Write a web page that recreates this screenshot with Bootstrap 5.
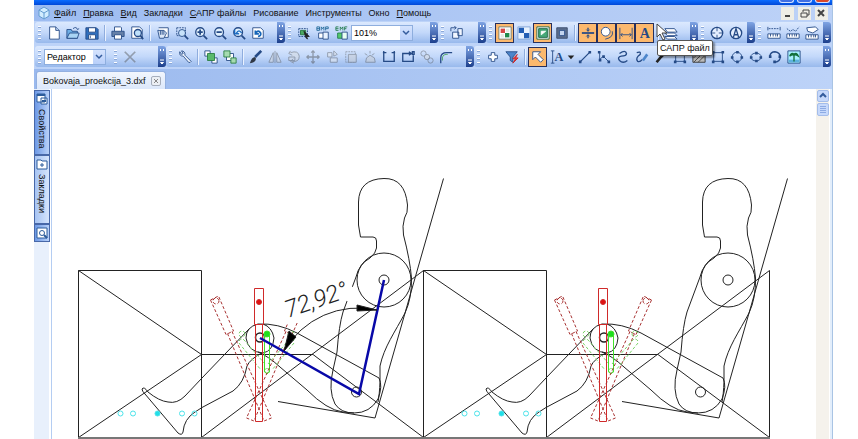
<!DOCTYPE html>
<html lang="ru">
<head>
<meta charset="utf-8">
<meta name="viewport" content="width=device-width, initial-scale=1">
<title>Bokovaja_proekcija_3.dxf</title>
<link href="https://cdn.jsdelivr.net/npm/bootstrap@5.3.0/dist/css/bootstrap.min.css" rel="stylesheet">
<style>
body{font-family:"Liberation Sans",Arial,sans-serif;font-size:9px;line-height:12px;color:#111;background:#fff}
.app{margin:0 25px 0 34px;background:#bdd3f8;border-right:1px solid #a9c4e4}
.titlebar{height:5px;background:linear-gradient(#0a6cff,#0048d8);gap:3px}
.wbtn{width:15px;height:3px;padding:0;border:1px solid #d5e2ff;border-top:0;border-radius:0 0 3px 3px;background:#3f6fe4}
.wbtn.closer{background:#d9482a;margin-right:2px}
.menubar{height:16px;background:linear-gradient(90deg,#9dbcf1,#bdd2f7)}
.menubar a{color:#111;text-decoration:none;padding:0 3px 0 4px}
.menubar u{text-underline-offset:1px}
.mdi button{width:13px;height:13px;padding:0;border:0;background:#efeee6;line-height:0}
.toolrow{display:grid;height:24px;padding:1px}
.row-one{grid-template-columns:250fr 153fr 48fr 212fr 57fr 76fr}
.row-two{grid-template-columns:131fr 308fr 357fr}
.band{height:21px;background:linear-gradient(#dce9fe,#c3d8fa 50%,#98b9ec);border-radius:3px;padding-left:3px;min-width:0}
.grip{width:3px;height:14px;flex:none;margin-right:3px;background:repeating-linear-gradient(#fff 0 1px,#8ba8d8 1px 2px,transparent 2px 4px)}
.tool{width:19px;height:20px;flex:none;padding:1px;border:1px solid transparent;background:none;display:flex;align-items:center;justify-content:center}
.tool.on{background:#fcb96e;border-color:#26305e}
.tool.off{opacity:.45;filter:grayscale(1)}
.tool svg{width:14px;height:14px;flex:none;fill:none;stroke:#254a86}
.tool text{font-family:"Liberation Serif",serif;font-weight:bold;fill:#254a86;stroke:none}
.tool.caret{width:9px}
.div{width:1px;height:16px;background:#8fadde;margin:0 3px;flex:none;box-shadow:1px 0 #eaf2ff}
.more{width:8px;height:21px;flex:none;margin-left:auto;padding:0;border:0;border-radius:0 3px 3px 0;background:linear-gradient(#7fa4e4,#1c3f8c);display:flex}
.more svg{width:8px;height:21px;fill:none}
.combo{border:1px solid #8eaede;width:62px;height:16px;padding:0 2px;border-radius:0;font-size:9px;line-height:14px;color:#000;appearance:none;
background:linear-gradient(#d5e3fd,#b8cffa) right/12px 100% no-repeat,#fff}
.combo-box{position:relative;display:flex}
.combo-box svg{position:absolute;right:3px;top:5px;width:8px;height:6px;pointer-events:none;fill:none}
.tabs{height:20px;padding-left:2px;background:linear-gradient(90deg,#9ab9ee,#bdd3f8)}
.doc{height:18px;width:130px;padding:0 4px 0 6px;background:linear-gradient(#f2f6fd,#dce8fb);border:1px solid #93b0e0;border-bottom:0;border-radius:3px 3px 0 0}
.doc a{color:#111;text-decoration:none}
.doc button{width:10px;height:10px;padding:0;border:1px solid #a6aebc;background:#eceff4;border-radius:2px;line-height:0}
.side{width:18px;background:linear-gradient(90deg,#e8f0fc 0 15px,#fff 15px 17px,#b4cdf2 17px);padding-top:1px}
.side button{width:16px;padding:2px 0;border:1px solid #4868a8;background:linear-gradient(90deg,#6d99e6,#b9d1f8);gap:4px;color:#111;line-height:12px}
.side .pick{background:linear-gradient(90deg,#a7c4f3,#d6e5fc)}
.side svg{width:12px;height:12px;flex:none}
.side span{writing-mode:vertical-rl}
.tall{height:65px}
.taller{height:69px}
.short{height:18px}
.sheet{background:#fff;min-height:0;overflow:hidden}
.vbar{width:13px;background:#f5f2ec;gap:1px;padding-top:1px}
.vbar button{width:12px;height:12px;padding:0;border:1px solid #a4bdea;border-radius:2px;background:#c7d9fb;line-height:0}
.vbar .thumb{height:13px}
.edge{width:3px;background:#e3eefb;border-left:1px solid #fff}
.tip{position:absolute;left:657px;top:40px;padding:1px 2px;border:1px solid #555;background:#fff;border-radius:2px;box-shadow:2px 2px 2px #0006;white-space:nowrap}
.pointer{position:absolute;left:656px;top:23px;width:12px;height:18px}
.cad{width:0;fill:none;stroke:#222;stroke-width:1}
.dim{font-family:Roboto,"Liberation Sans",sans-serif;font-weight:300;font-style:italic;font-size:24px;fill:#222;stroke:none}
</style>
<script src="https://cdn.jsdelivr.net/npm/bootstrap@5.3.0/dist/js/bootstrap.bundle.min.js"></script>
</head>
<body class="position-relative">
<svg width="0" height="0" class="position-absolute">
<symbol id="new" viewBox="0 0 16 16"><path d="M3 1h7l4 4v10H3z" fill="#fff"/><path d="M10 1v4h4" fill="#c5d8f6"/></symbol>
<symbol id="open" viewBox="0 0 16 16"><path d="M1 14V4h5l1 2h6v8z" fill="#6daee6"/><path d="M1 14l3-6h11l-2 6z" fill="#a9d4f5"/><path d="M8 3q4-3 5 1l2-1"/></symbol>
<symbol id="save" viewBox="0 0 16 16"><path d="M1 2h12l2 2v11H1z" fill="#2f6fbe"/><path d="M4 2h8v5H4zM4 10h8v5H4z" fill="#fff"/><path d="M6 11v3"/></symbol>
<symbol id="print" viewBox="0 0 16 16"><path d="M4 6V1h7l1 1v4" fill="#fff"/><path d="M1 6h14v6H1z" fill="#6580a8"/><path d="M4 10h8v5H4z" fill="#fff"/></symbol>
<symbol id="preview" viewBox="0 0 16 16"><path d="M2 1h9l3 3v10H2z" fill="#fff"/><circle cx="9" cy="8" r="4" fill="#bfe0fa" stroke-width="1.5"/><path d="M12 11l3 4" stroke-width="2"/></symbol>
<symbol id="pan" viewBox="0 0 16 16"><path d="M3 2h11v11H5" fill="#fff"/><path d="M2 5h7l3 3-3 6H4z" fill="#dce8f8"/><path d="M5 5v5m2-5v5m2-5v5"/></symbol>
<symbol id="zwin" viewBox="0 0 16 16"><path d="M2 2h10v9H2z" stroke-dasharray="2 1"/><circle cx="8" cy="8" r="4" fill="#c7e2fa"/><path d="M11 11l4 4" stroke-width="2"/></symbol>
<symbol id="zin" viewBox="0 0 16 16"><circle cx="7" cy="7" r="5" fill="#e2f1fd" stroke-width="1.5"/><path d="M11 11l4 4" stroke-width="2"/><path d="M4 7h6M7 4v6" stroke-width="2"/></symbol>
<symbol id="zout" viewBox="0 0 16 16"><circle cx="7" cy="7" r="5" fill="#e2f1fd" stroke-width="1.5"/><path d="M11 11l4 4" stroke-width="2"/><path d="M4 7h6" stroke-width="2"/></symbol>
<symbol id="zback" viewBox="0 0 16 16"><circle cx="7" cy="7" r="5" fill="#e2f1fd" stroke-width="1.5"/><path d="M11 11l4 4" stroke-width="2"/><path d="M3 4v5h5L5 8q3-5 6 0" stroke="#1a6ac0" stroke-width="1.5"/></symbol>
<symbol id="redraw" viewBox="0 0 16 16"><path d="M2 2h9l3 3v9H2z" fill="#fff"/><path d="M5 5v4h4M5 9q3-6 6-1 1 3-3 4" stroke="#1766b8" stroke-width="2"/></symbol>
<symbol id="sel" viewBox="0 0 16 16"><path d="M2 3h10v9H2z" stroke-dasharray="2 1"/><path d="M4 5h6v5H4z" fill="#4aa860" stroke="#23733c"/><path d="M8 6l6 6-3 0 1 3-2-2z" fill="#222" stroke="#222"/></symbol>
<symbol id="bmp" viewBox="0 0 16 16"><path d="M1 5V1h3v4zM1 3h3M6 5V1l1.500 2L9 1v4M11 5V1h3v2h-3" stroke="#246a9a"/><path d="M3 8h6v6H3z" fill="#fff"/><path d="M8 7h6v8H8z" fill="#e8f2ff"/></symbol>
<symbol id="emf" viewBox="0 0 16 16"><path d="M4 1H1v4h3M1 3h3M6 5V1l1.500 2L9 1v4M11 5V1h3m-3 2h2" stroke="#257d50"/><path d="M3 8h6v6H3z" fill="#54c96a" stroke="#257d50"/><path d="M8 7h6v8H8z" fill="#e8fff2"/></symbol>
<symbol id="copyv" viewBox="0 0 16 16"><path d="M9 3h5v8H9zM3 7h7v7H3z" fill="#f2f7ff"/><path d="M1 6V2h6M5 0l2 2-2 2"/></symbol>
<symbol id="rg" viewBox="0 0 16 16"><path d="M1 1h14v14H1z" fill="#fff" stroke="#6b7c70"/><path d="M3 3h5v5H3z" fill="#d64a48" stroke="none"/><path d="M8 8h5v5H8z" fill="#1f8a4c" stroke="none"/><path d="M9 3h4v4H9zM3 9h4v4H3z" fill="#e4ece6" stroke="none"/></symbol>
<symbol id="bw" viewBox="0 0 16 16"><path d="M1 1h14v14H1z" fill="#e7f2ff" stroke="#7fa2d5"/><path d="M2 2h6v6H2zM8 8h6v6H8z" fill="#225eb4" stroke="none"/></symbol>
<symbol id="gr" viewBox="0 0 16 16"><path d="M1 1h14v14H1z" fill="#fff" stroke="#176443"/><path d="M3 3h10v10H3z" fill="#46a878" stroke="#176443"/><path d="M6 10V6h5z" fill="#fff" stroke="#fff"/></symbol>
<symbol id="bk" viewBox="0 0 16 16"><path d="M2 2h12v12H2z" fill="#5b6e8e" stroke="#37496a"/><path d="M5 5h6v6H5z" fill="#c4d5ef"/></symbol>
<symbol id="hl" viewBox="0 0 16 16"><path d="M1 8h14" stroke-width="2"/><path d="M8 2v4m0 4v4" stroke-width="1.500"/><path d="M6 4l2 2 2-2M6 12l2-2 2 2"/></symbol>
<symbol id="arcs" viewBox="0 0 16 16"><circle cx="6.500" cy="6.500" r="5" fill="#fff"/><path d="M14 6q2 7-8 9"/></symbol>
<symbol id="dimh" viewBox="0 0 16 16"><path d="M1 2v13M15 2v13M2 10h12M4 8l-2 2 2 2m8-4l2 2-2 2"/></symbol>
<symbol id="layers" viewBox="0 0 16 16"><path d="M1 12h11l3 3H4zM1 8h11l3 3H4zM1 3h11l3 4H4z" fill="#fff"/></symbol>
<symbol id="snap" viewBox="0 0 16 16"><circle cx="8" cy="8" r="6.500" fill="#e5efff" stroke-width="1.500"/><path d="M8 1v5m0 4v5M1 8h5m4 0h5"/></symbol>
<symbol id="snapa" viewBox="0 0 16 16"><circle cx="8" cy="8" r="6.500" fill="#e5efff" stroke-width="1.500"/><path d="M5 13L8 3l3 10M6 10h4" stroke-width="1.500"/></symbol>
<symbol id="m1" viewBox="0 0 16 16"><path d="M2 3h12" stroke-dasharray="2 1"/><path d="M1 9h14v5H1z" fill="#fff"/><path d="M4 9v3m3-3v3m3-3v3m2-3v3M1 1v4m14-4v4"/></symbol>
<symbol id="m2" viewBox="0 0 16 16"><path d="M1 3l4 3 3-2 3 2 4-5" stroke-dasharray="2 1"/><path d="M1 9h14v5H1z" fill="#fff"/><path d="M4 9v3m3-3v3m3-3v3m2-3v3"/></symbol>
<symbol id="m3" viewBox="0 0 16 16"><path d="M2 2l10-1 3 3-6 4-6-2zM1 10h14v5H1z" fill="#fff"/><path d="M4 10v3m3-3v3m3-3v3m2-3v3"/></symbol>
<symbol id="x" viewBox="0 0 16 16"><path d="M2 2l12 12M14 2L2 14" stroke="#5b5242" stroke-width="2"/></symbol>
<symbol id="wrench" viewBox="0 0 16 16"><path d="M2 2q-1 5 4 5l6 7q2 1 3-1L8 6q0-5-4-5l2 3-2 1z" fill="#f3f8ff"/></symbol>
<symbol id="grp" viewBox="0 0 16 16"><path d="M1 1h6v6H1zM9 9h6v6H9z" fill="#fff"/><path d="M4 4h8v8H4z" fill="#59b96c" stroke="#287d40"/></symbol>
<symbol id="ungrp" viewBox="0 0 16 16"><path d="M4 4h8v8H4z" fill="#fff"/><path d="M1 1h7v7H1zM9 9h6v6H9z" fill="#a6dbb0" stroke="#287d40"/></symbol>
<symbol id="brush" viewBox="0 0 16 16"><path d="M14 1L7 8" stroke-width="3"/><path d="M7 8q-4 0-6 7 6 0 7-5z" fill="#303845" stroke="none"/></symbol>
<symbol id="mirror" viewBox="0 0 16 16"><path d="M6 3v11H1zM10 3v11h5z" fill="#ddd"/><path d="M8 1v14"/></symbol>
<symbol id="rot" viewBox="0 0 16 16"><path d="M4 3q9-3 10 4 0 7-8 6M7 10l-3 3 4 2M4 1L2 4l4 2M2 8h7v4H2z" fill="#ddd"/></symbol>
<symbol id="move" viewBox="0 0 16 16"><path d="M8 1v14M1 8h14M6 3l2-2 2 2M6 13l2 2 2-2M3 6L1 8l2 2m10-4l2 2-2 2" stroke-width="1.500"/></symbol>
<symbol id="copies" viewBox="0 0 16 16"><path d="M3 3h5v5H3zM10 1l4 4-4 2zM6 9h8v5H6z" fill="#eee"/></symbol>
<symbol id="scale" viewBox="0 0 16 16"><path d="M2 2h11v12H2z" stroke-dasharray="2 1"/><path d="M5 5h9v9H5z" fill="#ccc"/></symbol>
<symbol id="burst" viewBox="0 0 16 16"><path d="M3 14l1-5 4-3 5 3 1 5zM8 1v3M2 4l3 2m8-2l-3 2" fill="#ccc"/></symbol>
<symbol id="join" viewBox="0 0 16 16"><path d="M2 4v9h12V4M1 3h4m6 0h4M2 1v4m12-4v4" stroke-width="1.500"/></symbol>
<symbol id="rect1" viewBox="0 0 16 16"><path d="M11 4H2v9h12V6M9 2l3 2-3 2M13 2h2v3h-2z" stroke-width="1.500"/></symbol>
<symbol id="chain" viewBox="0 0 16 16"><circle cx="4" cy="4" r="3"/><circle cx="8" cy="8" r="3" fill="#ddd"/><circle cx="12" cy="12" r="3"/></symbol>
<symbol id="fillet" viewBox="0 0 16 16"><path d="M2 15V9q0-6 7-6h6" stroke-width="1.500"/><path d="M4 12V8q1-3 4-3h2" stroke="#4aa860"/></symbol>
<symbol id="plus" viewBox="0 0 16 16"><path d="M6 3h4v3h3v4h-3v3H6v-3H3V6h3z" fill="#fff"/></symbol>
<symbol id="filter" viewBox="0 0 16 16"><path d="M1 2h13L9 8v6l-3-2V8z" fill="#4d86cb"/><path d="M14 5l-5 5h3l-3 5 6-6h-3z" fill="#ef4545" stroke="#c22"/></symbol>
<symbol id="arrow" viewBox="0 0 16 16"><path d="M2 2h9L8 5l6 6-3 3-6-6-3 3z" fill="#fff"/></symbol>
<symbol id="line" viewBox="0 0 16 16"><path d="M3 13L13 3" stroke-width="1.500"/><path d="M1 12h3v3H1zM12 1h3v3h-3z" fill="#254a86" stroke="none"/></symbol>
<symbol id="poly" viewBox="0 0 16 16"><path d="M3 3v8l4-4 6 6"/><path d="M1 1h3v3H1zM2 10h3v3H2zM6 6h3v3H6zM12 12h3v3h-3z" fill="#254a86" stroke="none"/></symbol>
<symbol id="spline" viewBox="0 0 16 16"><path d="M4 4q7-5 8 0 0 3-6 3-5 1-2 5 4 4 9 0" stroke-width="1.500"/></symbol>
<symbol id="free" viewBox="0 0 16 16"><path d="M2 3q5-2 4 2-6 4-3 8 3 1 5-2" stroke-width="1.500"/><path d="M9 12l5-7" stroke="#4d86cb" stroke-width="3"/></symbol>
<symbol id="pen" viewBox="0 0 16 16"><path d="M3 14l4-5 5-5" stroke="#222" stroke-width="3"/></symbol>
<symbol id="hatch" viewBox="0 0 16 16"><path d="M1 3h14v11H1z" fill="#bbb" stroke="#333"/><path d="M2 9l6-6M2 14L13 3M7 14l8-8" stroke="#444"/></symbol>
<symbol id="box" viewBox="0 0 16 16"><path d="M3 3h10v10H3z"/><path d="M1 1h3v3H1zM12 1h3v3h-3zM1 12h3v3H1zM12 12h3v3h-3z" fill="#254a86" stroke="none"/></symbol>
<symbol id="circ" viewBox="0 0 16 16"><circle cx="8" cy="8" r="5.500"/><path d="M7 1h3v3H7zM7 12h3v3H7zM1 7h3v3H1zM12 7h3v3h-3z" fill="#254a86" stroke="none"/></symbol>
<symbol id="ell" viewBox="0 0 16 16"><ellipse cx="8" cy="8" rx="6" ry="4.500"/><path d="M7 2h3v3H7zM7 11h3v3H7zM1 7h3v3H1zM12 7h3v3h-3z" fill="#254a86" stroke="none"/></symbol>
<symbol id="arc" viewBox="0 0 16 16"><path d="M2 7q1-5 6-5 6 1 6 6 0 5-6 6" stroke-width="1.500"/><path d="M1 6h3v3H1zM12 6h3v3h-3zM6 12h3v3H6z" fill="#254a86" stroke="none"/></symbol>
<symbol id="img" viewBox="0 0 16 16"><path d="M1 1h14v14H1z" fill="#a7efff"/><path d="M2 11h12v3H2z" fill="#5cb2df" stroke="none"/><path d="M8 5v8M3 7q2-5 5-2 3-3 5 2-3-2-5-1-2-1-5 1" fill="#159647" stroke="#126e38" stroke-width="1.500"/></symbol>
<symbol id="mo" viewBox="0 0 8 21"><path d="M2 3l1 1-1 1m3-2l1 1-1 1M2 14h4M2.500 16.500h3L4 18z" stroke="#fff"/></symbol>
<symbol id="mo2" viewBox="0 0 8 21"><path d="M2 14h4M2.500 16.500h3L4 18z" stroke="#fff"/></symbol>
<symbol id="dn" viewBox="0 0 8 6"><path d="M1 1l3 3 3-3" stroke="#345c9c" stroke-width="1.500"/></symbol>
</svg>

<div class="app d-flex flex-column vh-100">
<header class="titlebar d-flex justify-content-end">
<button class="wbtn" aria-label="Свернуть"></button><button class="wbtn" aria-label="Развернуть"></button><button class="wbtn closer" aria-label="Закрыть"></button>
</header>
<nav class="menubar d-flex align-items-center ps-1 flex-shrink-0">
<svg width="12" height="14" viewBox="0 0 12 14" fill="none" stroke="#639bd0"><path d="M1 4l5-3 5 3v6l-5 3-5-3z" fill="#d1ecff"/><path d="M1 4l5 3 5-3M6 7v6"/></svg>
<a href="#"><u>Ф</u>айл</a><a href="#"><u>П</u>равка</a><a href="#"><u>В</u>ид</a><a href="#">Закладки</a><a href="#"><u>С</u>АПР файлы</a><a href="#">Рисование</a><a href="#">Инструменты</a><a href="#">Окно</a><a href="#"><u>П</u>омощь</a>
<div class="mdi d-flex gap-1 ms-auto pe-1"><button aria-label="Свернуть документ"><svg width="11" height="11"><path d="M3 8h5" stroke="#444" stroke-width="2"/></svg></button><button aria-label="Восстановить документ"><svg width="11" height="11" fill="none" stroke="#444"><path d="M4 4V2h6v5H8M2 5h6v4H2z"/></svg></button><button aria-label="Закрыть документ"><svg width="11" height="11"><path d="M2 2l6 6m0-6L2 8" stroke="#444" stroke-width="2"/></svg></button></div>
</nav>

<div class="toolrow row-one flex-shrink-0" role="toolbar" aria-label="Стандартная">
<div class="band d-flex align-items-center"><i class="grip"></i>
<button class="tool" aria-label="Новый"><svg><use href="#new"/></svg></button><button class="tool" aria-label="Открыть"><svg><use href="#open"/></svg></button><button class="tool" aria-label="Сохранить"><svg><use href="#save"/></svg></button><i class="div"></i>
<button class="tool" aria-label="Печать"><svg><use href="#print"/></svg></button><button class="tool" aria-label="Просмотр"><svg><use href="#preview"/></svg></button><i class="div"></i>
<button class="tool" aria-label="Панорама"><svg><use href="#pan"/></svg></button><button class="tool" aria-label="Окно масштаба"><svg><use href="#zwin"/></svg></button><button class="tool" aria-label="Увеличить"><svg><use href="#zin"/></svg></button><button class="tool" aria-label="Уменьшить"><svg><use href="#zout"/></svg></button><button class="tool" aria-label="Прежний масштаб"><svg><use href="#zback"/></svg></button><button class="tool" aria-label="Обновить"><svg><use href="#redraw"/></svg></button>
<button class="more" aria-label="Ещё"><svg><use href="#mo"/></svg></button></div>
<div class="band d-flex align-items-center"><i class="grip"></i>
<button class="tool" aria-label="Выделить"><svg><use href="#sel"/></svg></button><button class="tool" aria-label="BMP"><svg><use href="#bmp"/></svg></button><button class="tool" aria-label="EMF"><svg><use href="#emf"/></svg></button>
<div class="combo-box"><select class="combo" aria-label="Масштаб"><option>101%</option></select><svg><use href="#dn"/></svg></div>
<button class="more" aria-label="Ещё"><svg><use href="#mo"/></svg></button></div>
<div class="band d-flex align-items-center"><i class="grip"></i><button class="tool" aria-label="Копировать вид"><svg><use href="#copyv"/></svg></button><button class="more" aria-label="Ещё"><svg><use href="#mo"/></svg></button></div>
<div class="band d-flex align-items-center"><i class="grip"></i>
<button class="tool on" aria-label="Цвет"><svg><use href="#rg"/></svg></button><button class="tool" aria-label="Чёрно-белый"><svg><use href="#bw"/></svg></button><button class="tool on" aria-label="Фон"><svg><use href="#gr"/></svg></button><button class="tool" aria-label="Чёрный фон"><svg><use href="#bk"/></svg></button><i class="div"></i>
<button class="tool on" aria-label="Толщина"><svg><use href="#hl"/></svg></button><button class="tool on" aria-label="Дуги"><svg><use href="#arcs"/></svg></button><button class="tool on" aria-label="Размеры"><svg><use href="#dimh"/></svg></button><button class="tool on" aria-label="Тексты"><svg viewBox="0 0 16 16"><text x="2" y="14" font-size="16">A</text></svg></button><i class="div"></i><button class="tool" aria-label="Слои"><svg><use href="#layers"/></svg></button>
<button class="more" aria-label="Ещё"><svg><use href="#mo"/></svg></button></div>
<div class="band d-flex align-items-center"><i class="grip"></i><button class="tool" aria-label="Привязка"><svg><use href="#snap"/></svg></button><button class="tool" aria-label="Автопривязка"><svg><use href="#snapa"/></svg></button><button class="more" aria-label="Ещё"><svg><use href="#mo2"/></svg></button></div>
<div class="band d-flex align-items-center"><i class="grip"></i><button class="tool" aria-label="Расстояние"><svg><use href="#m1"/></svg></button><button class="tool" aria-label="Длина"><svg><use href="#m2"/></svg></button><button class="tool" aria-label="Площадь"><svg><use href="#m3"/></svg></button><button class="more" aria-label="Ещё"><svg><use href="#mo2"/></svg></button></div>
</div>

<div class="toolrow row-two flex-shrink-0" role="toolbar" aria-label="Редактор">
<div class="band d-flex align-items-center"><i class="grip"></i><div class="combo-box me-1"><select class="combo" aria-label="Режим"><option>Редактор</option></select><svg><use href="#dn"/></svg></div><i class="grip ms-1"></i><button class="tool off" aria-label="Удалить"><svg><use href="#x"/></svg></button><button class="more" aria-label="Ещё"><svg><use href="#mo"/></svg></button></div>
<div class="band d-flex align-items-center"><i class="grip"></i>
<button class="tool" aria-label="Свойства объекта"><svg><use href="#wrench"/></svg></button><i class="div"></i><button class="tool" aria-label="Группа"><svg><use href="#grp"/></svg></button><button class="tool" aria-label="Разгруппировать"><svg><use href="#ungrp"/></svg></button><i class="div"></i>
<button class="tool" aria-label="Кисть"><svg><use href="#brush"/></svg></button><button class="tool off" aria-label="Отразить"><svg><use href="#mirror"/></svg></button><button class="tool off" aria-label="Повернуть"><svg><use href="#rot"/></svg></button><button class="tool off" aria-label="Переместить"><svg><use href="#move"/></svg></button><button class="tool off" aria-label="Копии"><svg><use href="#copies"/></svg></button><button class="tool off" aria-label="Размер"><svg><use href="#scale"/></svg></button><button class="tool off" aria-label="Разбить"><svg><use href="#burst"/></svg></button><button class="tool" aria-label="Соединить"><svg><use href="#join"/></svg></button><button class="tool" aria-label="Замкнуть"><svg><use href="#rect1"/></svg></button><button class="tool off" aria-label="Цепь"><svg><use href="#chain"/></svg></button><button class="tool" aria-label="Скругление"><svg><use href="#fillet"/></svg></button>
<button class="more" aria-label="Ещё"><svg><use href="#mo"/></svg></button></div>
<div class="band d-flex align-items-center"><i class="grip"></i>
<button class="tool" aria-label="Добавить"><svg><use href="#plus"/></svg></button><button class="tool" aria-label="Фильтр"><svg><use href="#filter"/></svg></button><i class="div"></i><button class="tool on" aria-label="Указатель"><svg><use href="#arrow"/></svg></button><button class="tool" aria-label="Текст"><svg viewBox="0 0 16 16"><path d="M1 1h4M3 1v14M1 15h4"/><text x="5" y="13" font-size="14">A</text></svg></button><button class="tool caret" aria-label="Вид текста"><svg viewBox="0 0 15 15"><path d="M4 6h7l-3.500 4z" fill="#222" stroke="none"/></svg></button>
<button class="tool" aria-label="Линия"><svg><use href="#line"/></svg></button><button class="tool" aria-label="Полилиния"><svg><use href="#poly"/></svg></button><button class="tool" aria-label="Сплайн"><svg><use href="#spline"/></svg></button><button class="tool" aria-label="Карандаш"><svg><use href="#free"/></svg></button><button class="tool" aria-label="Перо"><svg><use href="#pen"/></svg></button><button class="tool" aria-label="Прямоугольник"><svg><use href="#box"/></svg></button><button class="tool" aria-label="Штриховка"><svg><use href="#hatch"/></svg></button><button class="tool" aria-label="Рамка"><svg><use href="#box"/></svg></button><button class="tool" aria-label="Окружность"><svg><use href="#circ"/></svg></button><button class="tool" aria-label="Эллипс"><svg><use href="#ell"/></svg></button><button class="tool" aria-label="Дуга"><svg><use href="#arc"/></svg></button><button class="tool" aria-label="Изображение"><svg><use href="#img"/></svg></button>
<button class="more" aria-label="Ещё"><svg><use href="#mo"/></svg></button></div>
</div>

<div class="tabs d-flex align-items-end flex-shrink-0"><div class="doc d-flex align-items-center justify-content-between"><a href="#">Bokovaja_proekcija_3.dxf</a><button aria-label="Закрыть вкладку"><svg width="8" height="8"><path d="M2 2l4 4m0-4L2 6" stroke="#888"/></svg></button></div></div>

<main class="d-flex flex-grow-1 sheet">
<aside class="side d-flex flex-column flex-shrink-0">
<button class="tall d-flex flex-column align-items-center"><svg viewBox="0 0 12 12" stroke="#2c5c9b" fill="#fff"><path d="M1 1h8v8H1zM5 5h6v6H5z"/><path d="M1 2h8M6 8h4" stroke-width="2"/></svg><span>Свойства</span></button>
<button class="pick taller d-flex flex-column align-items-center"><svg viewBox="0 0 12 12" stroke="#2c5c9b" fill="#fff"><path d="M1 2h4l1 1h5v8H1z"/><path d="M6 5v4M4 7h4"/></svg><span>Закладки</span></button>
<button class="short d-flex flex-column align-items-center" aria-label="Поиск"><svg viewBox="0 0 12 12" stroke="#2c5c9b" fill="#fff"><path d="M1 1h10v10H1z"/><circle cx="6" cy="6" r="2.500"/><path d="M8 8l3 3" stroke-width="2"/></svg></button>
</aside>
<svg class="cad flex-grow-1 h-100" role="img" aria-label="Чертёж">
<defs>
<clipPath id="low"><path d="M200 323h150v110H200z"/></clipPath>
<g id="lever" stroke="#a83232"><path d="M210.500 300l8-4 15 35-7.500 3.500zM227.500 333.500L264 421l7.500-3L232 331.500" transform="translate(0 0)" stroke-dasharray="3 2"/><circle cx="216" cy="301" r="3" stroke-dasharray="3 2"/></g>
<g id="slot" stroke="#7bd36a" stroke-dasharray="3 2"><circle cx="242" cy="334" r="3"/><path d="M239 341q3-4 6 0l20 23M239 343l22 27"/></g>
<g id="man">
<path d="M360.500 237L358.500 225V202Q359 179 384 178.500Q405 178 407.500 205Q408 213 404.500 218Q402 226 403.500 235Q410 260 411.500 278Q412 298 405 313C395 332 384 347 380 366V381Q379.500 395 378 402M360.500 237H373Q376.500 237 376.500 241V248Q376 253 370 258Q359 264 356 277L343 312Q339 325 337 352L333 370Q328 390 335 404Q341 413 354 413Q370 413 378 399Q383 386 379 378L297 333Q278 323 258 324Q246 327 246 338Q248 352 263 353Q273 351 274 338Q272 327 263 324M258 352Q268 356 280 367L307 390Q327 410 343 412L354 413"/>
<circle cx="384" cy="280" r="27"/><circle cx="384" cy="280" r="5"/><circle cx="356.500" cy="392" r="5"/><circle cx="260" cy="337.500" r="4.500" stroke-width="1.500"/>
<path d="M443.500 178.500L375 418L278 401.500"/>
<path d="M249 329L202 378L185 396Q177 404 168 402Q159 401 148 392Q144 386 142 389Q142 391 145 394L178 433Q182 436 183 432Q184 419 195 412L202 407.500L233 391Q244 383 247 366Q250 359 262 353"/>
<use href="#lever"/><use href="#slot"/>
<g stroke="#d02a2a"><path d="M254.500 288.500h9v36h-9zM255.500 324.500h7v97h-7z"/><circle cx="259" cy="302" r="2.500" fill="#e01010"/></g>
<g stroke="#43e02a"><path d="M264.500 335v36M269.500 335v36M264.500 371q2.500 5 5 0"/><circle cx="267" cy="334" r="3" fill="#1de01d"/><circle cx="267" cy="371" r="2.500" stroke-dasharray="2 1"/></g>
<g stroke="#4be3ea"><circle cx="120.500" cy="413.500" r="2.500"/><circle cx="133" cy="413.500" r="2.500"/><circle cx="157.500" cy="413.500" r="2.500" fill="#21dfe8"/><circle cx="182" cy="413.500" r="2.500"/><circle cx="194.500" cy="413.500" r="2.500"/></g>
</g>
</defs>
<g transform="translate(-52 -89)">
<path d="M78.500 437.500V270.500H201.500V437.500M78.500 270.500L201.500 354.500L78.500 437.500M201.500 354.500H313L423.500 437.500M201.500 437.500L423.500 270.500V437.500L546.500 354.500L423.500 270.500H546.500V437.500L769.500 270.500V437.500M546.500 354.500H658L769.500 437.500"/>
<path d="M78 438H770" stroke="#777" stroke-width="2"/>
<use href="#man"/><use href="#man" x="344"/>
<g clip-path="url(#low)"><use href="#lever" transform="matrix(-1 0 0 1 518 0)"/></g>
<use href="#lever" transform="matrix(-1 0 0 1 862 0)"/>
<use href="#slot" transform="matrix(-1 0 0 1 533 0)"/><use href="#slot" transform="matrix(-1 0 0 1 877 0)"/>
<path d="M353 287L347 301" stroke="#fff" stroke-width="4"/>
<path d="M384 280L359 394L260 338" stroke="#0808a8" stroke-width="2.500"/>
<path d="M284 351A86 86 0 0 1 377 310"/><path d="M284 351l5-20 7 6zM377 310l-20-5v6z" fill="#000"/>
<text class="dim" transform="translate(288 318) rotate(-19)">72,92°</text>
</g>
</svg>
<div class="vbar d-flex flex-column align-items-center flex-shrink-0"><button aria-label="Вверх"><svg width="8" height="8" fill="none"><path d="M1 5l3-3 3 3" stroke="#345c9c" stroke-width="2"/></svg></button><button class="thumb" aria-label="Ползунок"><svg width="8" height="9"><path d="M1 1.500h6M1 3.500h6M1 5.500h6M1 7.500h6" stroke="#8dabe4"/></svg></button></div>
<div class="edge flex-shrink-0"></div>
</main>
</div>
<div class="tip" role="tooltip">САПР файл</div>
<svg class="pointer" viewBox="0 0 12 18"><path d="M1 1v13l3-3 3 6 2-1-3-6h5z" fill="#fff" stroke="#444"/></svg>
</body>
</html>
